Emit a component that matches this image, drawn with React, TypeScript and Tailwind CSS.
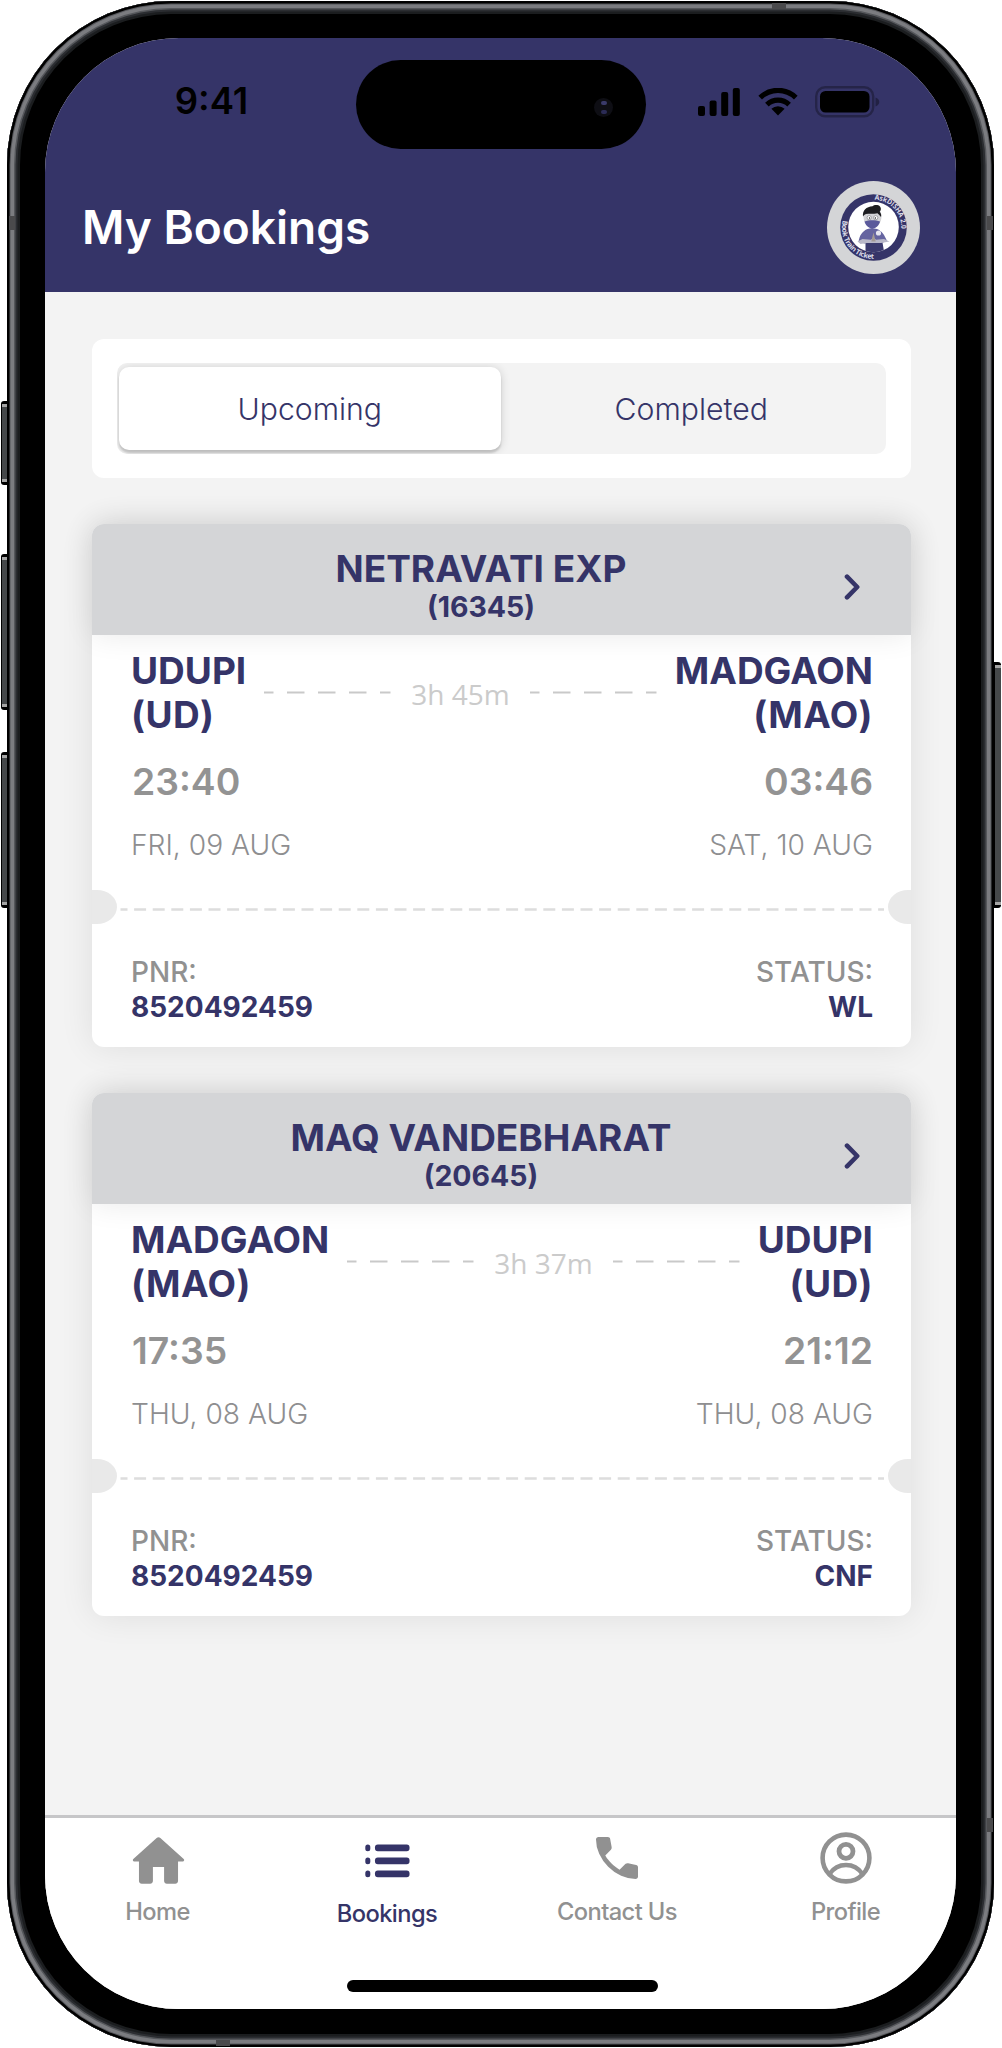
import { useState } from "react";

type Stop = { name: string; code: string; time: string; date: string };

type Booking = {
    train: string;
    number: string;
    duration: string;
    from: Stop;
    to: Stop;
    pnr: string;
    status: string;
};

const bookings: Booking[] = [
    {
        train: "NETRAVATI EXP",
        number: "(16345)",
        duration: "3h 45m",
        from: { name: "UDUPI", code: "(UD)", time: "23:40", date: "FRI, 09 AUG" },
        to: { name: "MADGAON", code: "(MAO)", time: "03:46", date: "SAT, 10 AUG" },
        pnr: "8520492459",
        status: "WL",
    },
    {
        train: "MAQ VANDEBHARAT",
        number: "(20645)",
        duration: "3h 37m",
        from: { name: "MADGAON", code: "(MAO)", time: "17:35", date: "THU, 08 AUG" },
        to: { name: "UDUPI", code: "(UD)", time: "21:12", date: "THU, 08 AUG" },
        pnr: "8520492459",
        status: "CNF",
    },
];

function SignalIcon() {
    return (
        <svg width="43" height="29" viewBox="0 0 43 29" fill="#000">
            <rect x="0" y="18" width="7" height="10" rx="2" />
            <rect x="11.6" y="12.5" width="7" height="15.5" rx="2" />
            <rect x="23.2" y="4" width="7" height="24" rx="2" />
            <rect x="34.8" y="0" width="7" height="28" rx="2" />
        </svg>
    );
}

function WifiIcon() {
    return (
        <svg width="40" height="28" viewBox="0 0 40 28" fill="none" stroke="#000" strokeWidth="5.2">
            <path d="M2.2 9.6A25.5 25.5 0 0 1 37.8 9.6" />
            <path d="M8.9 16.6A16 16 0 0 1 31.1 16.6" />
            <path d="M20 27.4L13.4 20.8A9.6 9.6 0 0 1 26.6 20.8Z" fill="#000" stroke="none" />
        </svg>
    );
}

function BatteryIcon() {
    return (
        <svg width="66" height="32" viewBox="0 0 66 32">
            <rect x="1.2" y="1.2" width="57" height="29" rx="9" fill="none" stroke="#000" strokeOpacity="0.3" strokeWidth="2.4" />
            <rect x="5" y="5" width="49.5" height="21.5" rx="5.5" fill="#000" />
            <path d="M60.5 11.5c2.4.9 3.8 2.6 3.8 4.5s-1.4 3.6-3.8 4.5z" fill="#000" fillOpacity="0.35" />
        </svg>
    );
}

function DishaAvatar() {
    return (
        <svg width="93" height="93" viewBox="0 0 93 93">
            <defs>
                <path id="ring-top" d="M47 18.7A27.8 27.8 0 0 1 74.3 46.5A27.8 27.8 0 0 1 46.5 74.3" />
                <path id="ring-bottom" d="M15.9 38.8A31.3 31.3 0 0 0 55 76.6" />
                <clipPath id="face-clip">
                    <circle cx="46.5" cy="46" r="25.3" />
                </clipPath>
            </defs>
            <circle cx="46.5" cy="46.5" r="46.5" fill="#d4d5d7" />
            <circle cx="46.5" cy="46.5" r="33.3" fill="#353468" />
            <circle cx="46.5" cy="46" r="25.3" fill="#fff" />
            <g clipPath="url(#face-clip)">
                <path d="M31.5 61c1-7 4-11 9-13l4.5-1 5 1c5 2 7.500 6 10 12l-7 2.500-7-3-8 3z" fill="#6564a0" />
                <path d="M38.5 61.5c4-2 12-2 17 0l2 12H38.500z" fill="#3b3a6e" />
                <path d="M30.5 60.5l5-2.500 8.500.8 2.500-2.500 2.500 2.500 8-.8 5.500 2.500-8.500 1.500h-14l-6.500 1z" fill="#b9b8c8" />
                <path d="M44.3 60.5l2.200-9 2.200 9z" fill="#a39a94" />
                <circle cx="51.5" cy="52" r="2.6" fill="#e6e6f0" />
                <path d="M36.5 35.5c0-6 3.500-8.500 9-8.500s9 2.500 9 8.500-4 11-9 11-9-5-9-11z" fill="#d3d3d6" />
                <path d="M37.5 40.5c4.500-1.600 11-1.600 15.500 0-1 4-4 7-7.500 7s-7-3-8-7z" fill="#5b5a9b" />
                <path d="M36 35.5c-1-6 3.500-10 9.500-10.300 1.500-1.500 5.800-1.700 7.500.3 1.600 2 .8 4-.3 5.200 1.400 1.500 1.800 3.500 1.300 5.300-1.500-1.500-2.500-3-3.500-3.700-4 1-9 .3-11.500.8-1.500.4-2.200 1.400-3 2.400z" fill="#1d1d20" />
                <circle cx="42.2" cy="36.7" r="2.1" fill="#fff" stroke="#77777c" strokeWidth="0.6" />
                <circle cx="48.7" cy="36.7" r="2.1" fill="#fff" stroke="#77777c" strokeWidth="0.6" />
                <circle cx="42.5" cy="37" r="0.7" fill="#222" />
                <circle cx="48.4" cy="37" r="0.7" fill="#222" />
            </g>
            <g fill="#dcdce8" fontSize="7.2" fontWeight="700" className="font-['Open_Sans']">
                <text>
                    <textPath href="#ring-top" startOffset="0.5" textLength="44" lengthAdjust="spacingAndGlyphs">AskDISHA 2.0</textPath>
                </text>
                <text>
                    <textPath href="#ring-bottom" startOffset="0.5" textLength="57">Book Train Ticket</textPath>
                </text>
            </g>
        </svg>
    );
}

function ListIcon() {
    return (
        <svg width="45" height="34" viewBox="0 0 45 34" fill="currentColor">
            {[0.5, 13.5, 26.5].map(y => (
                <g key={y}>
                    <rect x="0.3" y={y} width="5" height="6.8" rx="2.5" />
                    <rect x="10" y={y} width="34.5" height="6.8" rx="2.8" />
                </g>
            ))}
        </svg>
    );
}

function HomeIcon() {
    return (
        <svg width="67" height="67" viewBox="0 0 24 24" fill="currentColor" className="ml-[2px] mt-[2px]">
            <path d="M10 19v-5h4v5c0 .55.45 1 1 1h3c.55 0 1-.45 1-1v-7h1.7c.46 0 .68-.57.33-.87L12.67 3.6c-.38-.34-.96-.34-1.34 0l-8.36 7.53c-.34.3-.13.87.33.87H5v7c0 .55.45 1 1 1h3c.55 0 1-.45 1-1z" />
        </svg>
    );
}

function PhoneIcon() {
    return (
        <svg width="56" height="56" viewBox="0 0 24 24" fill="currentColor" className="-mt-[4px]">
            <path d="M19.95 21q-3.125 0-6.175-1.362T8.225 15.775Q5.725 13.275 4.362 10.225T3 4.05q0-.45.3-.75t.75-.3H8.1q.35 0 .625.238t.325.562l.65 3.5q.05.4-.025.675T9.4 8.45L6.975 10.9q.5.925 1.187 1.787t1.513 1.663q.775.775 1.625 1.438T13.1 17l2.35-2.35q.225-.225.588-.337t.712-.063l3.45.7q.35.1.575.363T21 15.9v4.05q0 .45-.3.75t-.75.3Z" />
        </svg>
    );
}

function ProfileIcon() {
    return (
        <svg width="52" height="52" viewBox="0 0 52 52" fill="none" stroke="currentColor" className="-mt-[5px]">
            <circle cx="26" cy="26" r="23.4" strokeWidth="4.6" />
            <circle cx="26" cy="19.3" r="7" strokeWidth="4.8" />
            <path d="M9.5 42C13.5 36.2 19.3 33 26 33s12.5 3.2 16.5 9" strokeWidth="4.6" />
        </svg>
    );
}

function RouteDashes() {
    return (
        <svg width="127" height="3" viewBox="0 0 127 3" className="shrink-0">
            <line x1="0" y1="1.5" x2="126.5" y2="1.5" stroke="#c9c9c9" strokeWidth="2" strokeDasharray="17.5 13.5" strokeDashoffset="8" />
        </svg>
    );
}

function BookingCard({ booking }: { booking: Booking }) {
    const { from, to } = booking;

    return (
        <article className="flex h-[523px] flex-col rounded-xl bg-white shadow-[0_0_34px_rgba(0,0,0,0.09)]">
            <header className="flex h-[111px] shrink-0 items-center rounded-t-xl bg-[#d4d5d7] pl-[26px] pr-[49px] text-[#353468] shadow-[0_0_30px_rgba(0,0,0,0.09)]">
                <div className="flex-1 pt-[11px] text-center font-bold">
                    <h2 className="text-[37px] leading-[44px]">{booking.train}</h2>
                    <p className="text-[28.5px] leading-[32px]">{booking.number}</p>
                </div>
                <svg width="18" height="28" viewBox="0 0 18 28" className="mt-[14px]" fill="none" stroke="currentColor" strokeWidth="4.6" strokeLinecap="round" strokeLinejoin="round">
                    <path d="M3 3.7L13.2 14L3 24.3" />
                </svg>
            </header>

            <div className="mt-[14px] flex items-start justify-between pl-[39px] pr-[38px]">
                <h3 className="text-[37px] font-bold leading-[44px] text-[#353468]">
                    {from.name}<br /><span className="tracking-[0.012em]">{from.code}</span>
                </h3>
                <div className="flex h-[86px] items-center gap-[20px]">
                    <RouteDashes />
                    <span className="mt-[3px] whitespace-nowrap font-['Open_Sans'] text-[28px] font-normal leading-[34px] text-[#cbcbcb]">{booking.duration}</span>
                    <RouteDashes />
                </div>
                <h3 className="text-right text-[37px] font-bold leading-[44px] text-[#353468]">
                    {to.name}<br /><span className="tracking-[0.012em]">{to.code}</span>
                </h3>
            </div>

            <div className="mt-[23px] flex justify-between pl-[40px] pr-[38px] text-[37.3px] font-semibold leading-[44px] text-[#939393]">
                <span>{from.time}</span>
                <span>{to.time}</span>
            </div>
            <div className="mt-[24px] flex justify-between pl-[39px] pr-[38px] text-[28.2px] font-[350] leading-[34px] text-[#8e8e90]">
                <span>{from.date}</span>
                <span>{to.date}</span>
            </div>

            {/* perforation */}
            <div className="mt-[28px] flex items-center justify-between">
                <span className="h-[34px] w-[25px] rounded-r-[20px_17px] bg-[#e9e9e9]" />
                <svg width="766" height="3" viewBox="0 0 766 3" className="mt-[5px]">
                    <line x1="0.5" y1="1.5" x2="764" y2="1.5" stroke="#dddddd" strokeWidth="2.4" strokeDasharray="12 6.6" strokeDashoffset="5" />
                </svg>
                <span className="h-[34px] w-[23px] rounded-l-[20px_17px] bg-[#e9e9e9]" />
            </div>

            <div className="mt-[31px] flex justify-between pl-[39px] pr-[38px] text-[28px] leading-[35px]">
                <div>
                    <p className="font-medium text-[#919191]">PNR:</p>
                    <p className="font-bold text-[#353468]">{booking.pnr}</p>
                </div>
                <div className="text-right">
                    <p className="font-medium text-[#919191]">STATUS:</p>
                    <p className="font-bold text-[#353468]">{booking.status}</p>
                </div>
            </div>
        </article>
    );
}

const navItems = [
    { label: "Home", Icon: HomeIcon, width: "w-[225px]", icon: "h-[62px]", color: "text-[#919191]" },
    { label: "Bookings", Icon: ListIcon, width: "w-[234px]", icon: "h-[64px]", color: "text-[#353468]" },
    { label: "Contact Us", Icon: PhoneIcon, width: "w-[226px]", icon: "h-[62px]", color: "text-[#919191]" },
    { label: "Profile", Icon: ProfileIcon, width: "w-[231px]", icon: "h-[62px]", color: "text-[#919191]" },
];

function SideButton({ className }: { className: string }) {
    return (
        <span className={`absolute w-[7px] border-y-[3px] border-black bg-[#45484a] shadow-[inset_1px_0_0_#000,inset_0_3px_0_#a5a5a5,inset_0_-3px_0_#a5a5a5] ${className}`} />
    );
}

export default function App() {
    const [tab, setTab] = useState<"Upcoming" | "Completed">("Upcoming");

    return (
        <div className="relative h-[2048px] w-[1002px] bg-white pl-[7px] pt-px font-['Inter',sans-serif]">
            <SideButton className="left-[1px] top-[401px] h-[84px] rounded-l-[3px]" />
            <SideButton className="left-[1px] top-[554px] h-[156px] rounded-l-[3px]" />
            <SideButton className="left-[1px] top-[752px] h-[156px] rounded-l-[3px]" />
            <SideButton className="left-[994px] top-[662px] h-[246px] rounded-r-[3px]" />

            <div className="relative h-[2046px] w-[987px] rounded-[164px] bg-black pl-[38px] pt-[37px] shadow-[inset_0_0_0_2.5px_#000,inset_0_0_0_3.5px_#55565a,inset_0_0_0_7px_#7b7c80,inset_0_0_0_8.5px_#55575b,inset_0_0_0_10.5px_#2b2d31,inset_0_0_0_13px_#1b1d1f]">
                {/* antenna bands */}
                <span className="absolute left-[2px] top-[215px] h-[14px] w-[6px] bg-[#4a4a4c]" />
                <span className="absolute right-[1px] top-[215px] h-[14px] w-[6px] bg-[#4a4a4c]" />
                <span className="absolute right-[1px] top-[1817px] h-[14px] w-[6px] bg-[#4a4a4c]" />
                <span className="absolute left-[765px] top-[2px] h-[6px] w-[14px] bg-[#4a4a4c]" />
                <span className="absolute bottom-[1px] left-[209px] h-[6px] w-[14px] bg-[#4a4a4c]" />

                <main className="flex h-[1971px] w-[911px] flex-col overflow-hidden rounded-[134px] bg-[#f3f3f3]">
                    <header className="h-[254px] shrink-0 bg-[#353468] pt-[22px]">
                        <div className="flex h-[89px] items-center">
                            <div className="flex w-[311px] justify-center pb-[7px] pl-[22px] text-[36.5px] font-semibold leading-[44px] text-black">9:41</div>
                            <div className="flex h-[89px] w-[290px] items-center justify-end rounded-full bg-black pr-[33px] pt-[6px]">
                                <span className="flex h-[19px] w-[19px] flex-col items-center justify-between rounded-full bg-[#0e0e14] py-[3px]">
                                    <span className="h-[4px] w-[6px] rounded-full bg-[#3a3a6a]" />
                                    <span className="h-[4px] w-[6px] rounded-full bg-[#2b2b55]" />
                                </span>
                            </div>
                            <div className="flex flex-1 items-center gap-[17px] pb-[5px] pl-[52px]">
                                <SignalIcon />
                                <WifiIcon />
                                <BatteryIcon />
                            </div>
                        </div>
                        <div className="mt-[32px] flex items-center justify-between pl-[37px] pr-[36px]">
                            <h1 className="pb-[2px] text-[46px] font-semibold leading-[56px] text-white">My Bookings</h1>
                            <DishaAvatar />
                        </div>
                    </header>

                    <div className="flex flex-1 flex-col gap-[46px] pl-[47px] pr-[45px] pt-[47px]">
                        <div className="rounded-xl bg-white px-[25px] py-[24px]">
                            <div className="flex h-[91px] overflow-hidden rounded-[10px] bg-[#f3f3f3] pb-[4px] pl-[2px] pr-[4px] pt-[4px]">
                                {(["Upcoming", "Completed"] as const).map(name => (
                                    <button key={name}
                                        onClick={() => setTab(name)}
                                        className={`flex-1 rounded-[10px] text-[30.2px] font-[350] leading-[36px] text-[#353468] ${tab === name
                                                ? "bg-white shadow-[0_3px_2px_rgba(0,0,0,0.14),0_1px_10px_rgba(0,0,0,0.16)]"
                                                : ""
                                            }`}>
                                        {name}
                                    </button>
                                ))}
                            </div>
                        </div>

                        {bookings.map(booking => (
                            <BookingCard key={booking.number} booking={booking} />
                        ))}
                    </div>

                    <nav className="h-[194px] shrink-0 border-t-[3px] border-[#c6c6c8] bg-white">
                        <div className="flex pt-[11px]">
                            {navItems.map(({ label, Icon, width, icon, color }) => (
                                <div key={label} className={`flex shrink-0 flex-col items-center ${width} ${color}`}>
                                    <span className={`flex items-center justify-center ${icon}`}><Icon /></span>
                                    <span className="mt-[7px] text-[23.7px] font-[450] leading-[28px] tracking-[-0.025em]">{label}</span>
                                </div>
                            ))}
                        </div>
                        <div className="ml-[302px] mt-[52px] h-[12px] w-[311px] rounded-full bg-black" />
                    </nav>
                </main>
            </div>
        </div>
    );
}
